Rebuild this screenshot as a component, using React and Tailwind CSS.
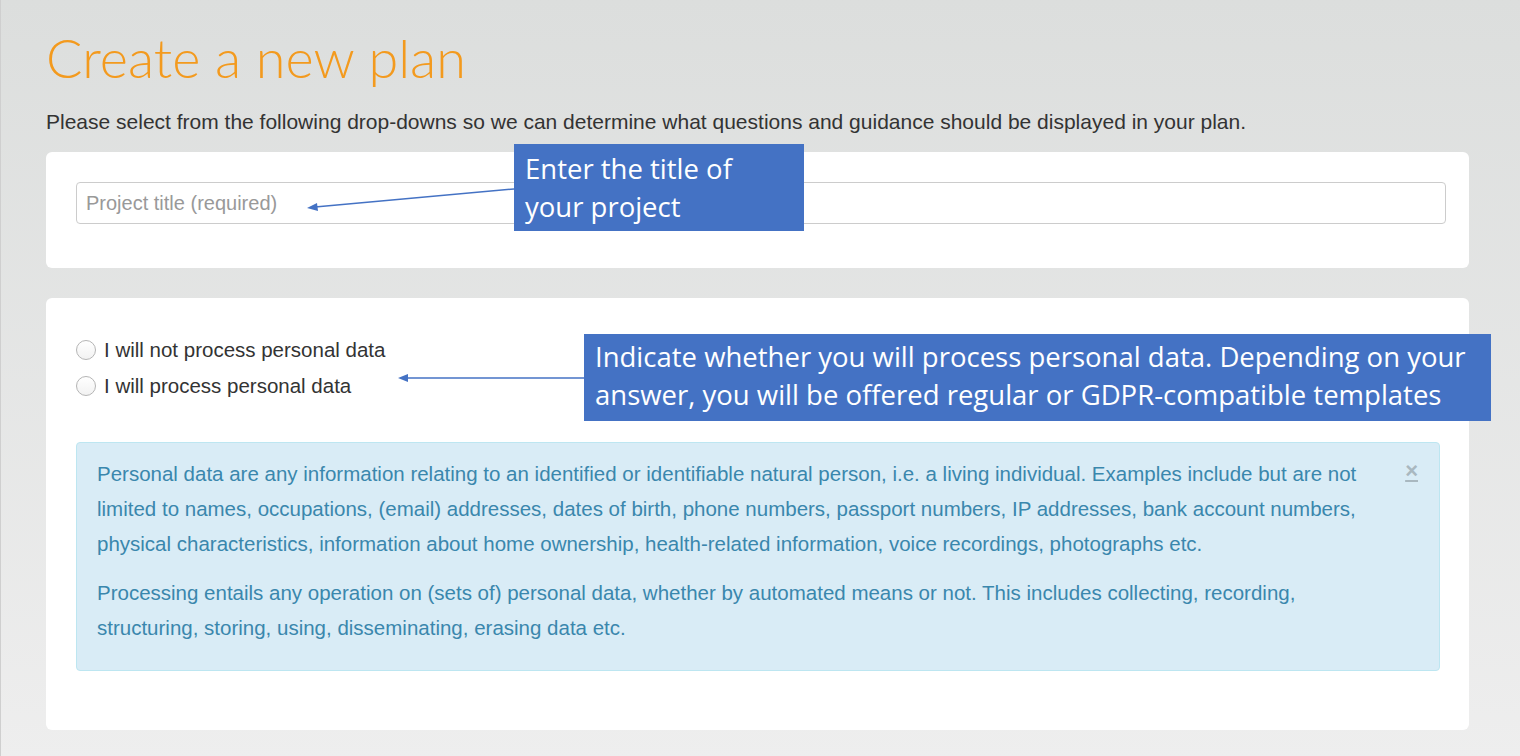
import React from 'react';

const Radio = ({ label }) => (
  <label className="flex items-center h-[36px] text-[20.5px] text-[#333]">
    <span className="w-[20px] h-[20px] rounded-full border border-[#b5b5b5] bg-gradient-to-b from-white to-[#f2f2f2] mr-[8px]" />
    {label}
  </label>
);

const Callout = ({ className, children }) => (
  <div
    className={`absolute bg-[#4472c4] text-white px-[11px] text-[27.5px] leading-[38px] ${className}`}
    style={{ fontFamily: '"Open Sans", "Noto Sans", sans-serif' }}
  >
    {children}
  </div>
);

export default function App() {
  return (
    <div
      className="relative min-h-screen bg-gradient-to-b from-[#dcdedd] to-[#eeeeee] pl-[45px] pr-[51px] pb-[30px] border-l border-[#cfcfcf]"
      style={{ fontFamily: '"Liberation Sans", Arial, sans-serif' }}
    >
      {/* Header */}
      <h1
        className="pt-[26px] text-[54px] leading-[64px] font-light text-[#f39a1e]"
        style={{ fontFamily: 'Lato, "Open Sans", sans-serif' }}
      >
        Create a new plan
      </h1>
      <p className="mt-[20px] text-[21px] leading-[24px] text-[#333]">
        Please select from the following drop-downs so we can determine what questions and guidance should be displayed in your plan.
      </p>

      {/* Title card */}
      <div className="mt-[18px] bg-white rounded-[6px] pt-[30px] pl-[30px] pr-[23px] pb-[44px]">
        <div className="h-[42px] border border-[#ccc] rounded-[4px] flex items-center px-[9px] text-[20px] text-[#999]">
          Project title (required)
        </div>
      </div>

      {/* Personal data card */}
      <div className="mt-[30px] bg-white rounded-[6px] pt-[34px] pl-[30px] pr-[29px] pb-[59px]">
        <Radio label="I will not process personal data" />
        <Radio label="I will process personal data" />

        <div className="relative mt-[38px] bg-[#d9ecf6] border border-[#bde6f1] rounded-[4px] pl-[20px] pr-[60px] pt-[13px] pb-[25px] text-[20.5px] leading-[35px] text-[#3a87ad]">
          <p>
            Personal data are any information relating to an identified or identifiable natural person, i.e. a living individual. Examples include but are not limited to names, occupations, (email) addresses, dates of birth, phone numbers, passport numbers, IP addresses, bank account numbers, physical characteristics, information about home ownership, health-related information, voice recordings, photographs etc.
          </p>
          <p className="mt-[14px]">
            Processing entails any operation on (sets of) personal data, whether by automated means or not. This includes collecting, recording, structuring, storing, using, disseminating, erasing data etc.
          </p>
          <span className="absolute top-[14px] right-[21px] text-[22px] leading-[28px] font-bold text-[#a9b8c0] underline">×</span>
        </div>
      </div>

      {/* Annotations */}
      <Callout className="left-[513px] top-[144px] w-[290px] h-[87px] pt-[6px]">
        Enter the title of<br />your project
      </Callout>
      <Callout className="left-[583px] top-[334px] w-[907px] h-[87px] pt-[4px]">
        Indicate whether you will process personal data. Depending on your<br />answer, you will be offered regular or GDPR-compatible templates
      </Callout>
      <svg className="absolute left-0 top-0 pointer-events-none" width="1520" height="756">
        <line x1="513" y1="189" x2="314" y2="207" stroke="#4472c4" strokeWidth="1.5" />
        <polygon points="306,208 316,203 317,211" fill="#4472c4" />
        <line x1="583" y1="378" x2="406" y2="378" stroke="#4472c4" strokeWidth="1.5" />
        <polygon points="397,378 407,374 407,382" fill="#4472c4" />
      </svg>
    </div>
  );
}
